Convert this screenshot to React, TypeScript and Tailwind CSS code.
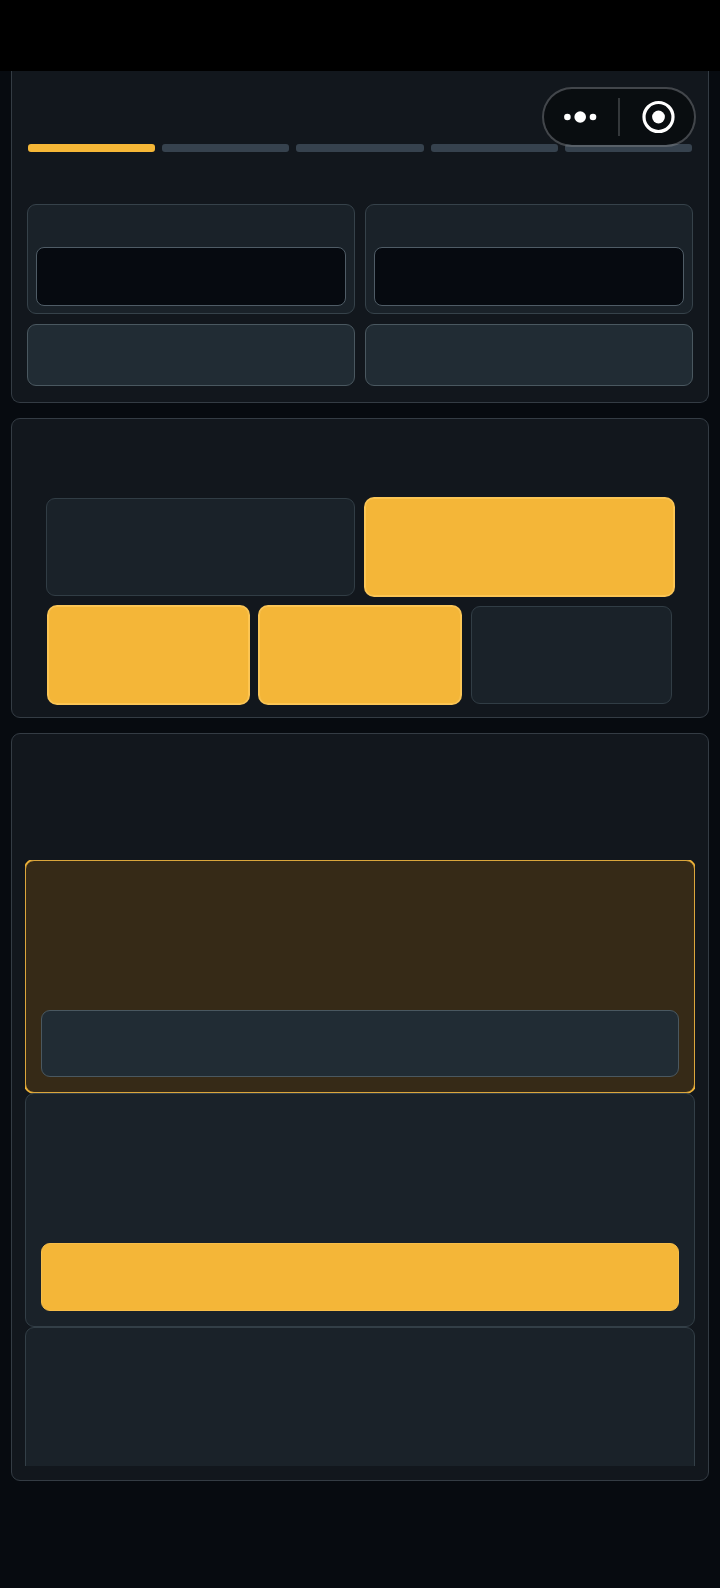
import type { ReactNode } from 'react'
import { clsx } from 'clsx'

const STEPS = [1, 2, 3, 4, 5]
const CURRENT_STEP = 1

export default function App() {
  return (
    <div className="relative min-h-screen bg-[#070b10] font-['Inter',sans-serif] text-gray-100">
      <div className="h-[71px] bg-black" />
      <CapsuleMenu />
      <main className="flex flex-col gap-[15px] px-[11px] pb-8">
        <SetupCard />
        <OptionsCard />
        <PlansCard />
      </main>
    </div>
  )
}

function CapsuleMenu() {
  return (
    <div className="absolute top-[87px] right-6 z-10 flex h-[60px] w-[154px] items-center rounded-full border-2 border-[#8c8f92]/40 bg-[#090d10]/95 bg-clip-padding">
      <button type="button" aria-label="More" className="flex h-full flex-1 items-center justify-center">
        <svg width="36" height="16" viewBox="0 0 36 16" fill="#fff">
          <circle cx="4.4" cy="8" r="3.3" />
          <circle cx="17.2" cy="8" r="5.8" />
          <circle cx="30" cy="8" r="3.3" />
        </svg>
      </button>
      <span className="h-[38px] w-0.5 bg-[#34383b]" />
      <button type="button" aria-label="Close" className="flex h-full flex-1 items-center justify-center">
        <svg width="38" height="34" viewBox="0 0 38 34" fill="none">
          <circle cx="20.5" cy="17" r="14.5" stroke="#fff" strokeWidth="3.2" />
          <circle cx="20.5" cy="17" r="6.4" fill="#fff" />
        </svg>
      </button>
    </div>
  )
}

function SetupCard() {
  return (
    <section className="rounded-b-[9px] border border-t-0 border-[#343c44] bg-[#12171d] px-[15px] pt-[73px] pb-4">
      <ol className="flex gap-[7px] px-px">
        {STEPS.map((step) => (
          <li
            key={step}
            className={clsx('h-2 flex-1 rounded-[3px]', step <= CURRENT_STEP ? 'bg-[#f5b737]' : 'bg-[#36424e]')}
          />
        ))}
      </ol>
      <div className="mt-[52px] grid grid-cols-2 gap-2.5">
        <Field name="first" />
        <Field name="second" />
        <SecondaryButton label="Previous" className="h-[62px]" />
        <SecondaryButton label="Next" className="h-[62px]" />
      </div>
    </section>
  )
}

function Field({ name }: { name: string }) {
  return (
    <div className="rounded-[9px] border border-[#36424a] bg-[#1a2229] px-2 pb-[7px]">
      <label htmlFor={name} className="block h-[42px]" />
      <input
        id={name}
        name={name}
        aria-label={name}
        className="block h-[59px] w-full rounded-lg border border-[#4f5c66] bg-[#060a10] px-3 outline-none"
      />
    </div>
  )
}

function SecondaryButton({ label, className }: { label: string; className: string }) {
  return (
    <button
      type="button"
      aria-label={label}
      className={clsx('block w-full rounded-[9px] border border-[#4a5860] bg-[#212c34]', className)}
    />
  )
}

function OptionsCard() {
  return (
    <section className="rounded-[9px] border border-[#343c44] bg-[#12171d] px-[34px] pt-[79px] pb-[13px]">
      <div className="grid grid-cols-2 gap-2.5">
        <Tile label="Option 1" />
        <Tile label="Option 2" selected />
      </div>
      <div className="mt-2.5 grid grid-cols-3 gap-2.5 px-0.5">
        <Tile label="Option 3" selected />
        <Tile label="Option 4" selected />
        <Tile label="Option 5" />
      </div>
    </section>
  )
}

function Tile({ label, selected = false }: { label: string; selected?: boolean }) {
  return (
    <button
      type="button"
      aria-label={label}
      aria-pressed={selected}
      className={clsx(
        'h-[98px] rounded-[9px] border',
        selected ? 'border-[#fdc550] bg-[#f4b638] ring-1 ring-[#fbc658]' : 'border-[#313d45] bg-[#1a2229]',
      )}
    />
  )
}

function PlansCard() {
  return (
    <section className="rounded-[9px] border border-[#343c44] bg-[#12171d] px-[13px] pt-[126px] pb-3.5">
      <div className="h-[606px] overflow-hidden">
        <div className="flex flex-col">
          <Plan selected>
            <SecondaryButton label="Selected" className="h-[67px]" />
          </Plan>
          <Plan>
            <PrimaryButton label="Select" />
          </Plan>
          <Plan>
            <PrimaryButton label="Select" />
          </Plan>
        </div>
      </div>
    </section>
  )
}

function Plan({ selected = false, children }: { selected?: boolean; children: ReactNode }) {
  return (
    <article
      className={clsx(
        'rounded-[9px] border px-[15px] pt-[149px] pb-[15px]',
        selected ? 'border-[#dba63c] bg-[#362a17] ring-1 ring-[#f5b737]' : 'border-[#333f47] bg-[#1a2229]',
      )}
    >
      {children}
    </article>
  )
}

function PrimaryButton({ label }: { label: string }) {
  return (
    <button
      type="button"
      aria-label={label}
      className="block h-[68px] w-full rounded-[9px] border border-[#f8be48] bg-[#f4b638]"
    />
  )
}
